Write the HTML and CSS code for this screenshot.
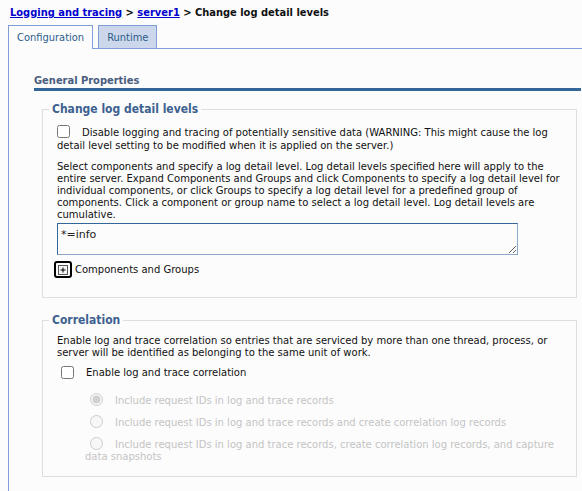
FILE: index.html
```html
<!DOCTYPE html>

<html>
  <head>
    <title>Change log detail levels</title>

    <link rel="stylesheet" href="styles.css">
  </head>
  <body>
    <div class="crumbs">
      <a href="#">Logging and tracing</a> &gt; <a href="#">server1</a> &gt; Change log detail levels
    </div>

    <div class="tabs">
      <span class="tab tab-active">Configuration</span>
      <span class="tab tab-other">Runtime</span>
    </div>

    <main class="panel">
      <h2 class="section-title">General Properties</h2>

      <fieldset class="group">
        <legend>Change log detail levels</legend>

        <label class="check-text">
          <input type="checkbox" class="first-check">Disable logging and tracing of potentially sensitive data (WARNING: This might cause the log detail level setting to be modified when it is applied on the server.)
        </label>

        <p class="help">
          Select components and specify a log detail level. Log detail levels specified here will apply to the
          entire server. Expand Components and Groups and click Components to specify a log detail level for
          individual components, or click Groups to specify a log detail level for a predefined group of
          components. Click a component or group name to select a log detail level. Log detail levels are
          cumulative.
        </p>

        <textarea class="spec">*=info</textarea>

        <div class="toggle">
          <span class="expander">
            <svg width="10" height="10" viewBox="0 0 10 10">
              <rect x="0.5" y="0.5" width="9" height="9" fill="#f4f4f4" stroke="#555"/>
              <path d="M2.5 5h5M5 2.5v5" stroke="#000" stroke-width="1"/>
            </svg>
          </span>
          Components and Groups
        </div>
      </fieldset>

      <fieldset class="group group-last">
        <legend>Correlation</legend>

        <p class="help intro">
          Enable log and trace correlation so entries that are serviced by more than one thread, process, or
          server will be identified as belonging to the same unit of work.
        </p>

        <label class="check-row">
          <input type="checkbox">Enable log and trace correlation
        </label>

        <div class="options">
          <label class="option"><input type="radio" name="corr" checked disabled>Include request IDs in log and trace records</label>
          <label class="option"><input type="radio" name="corr" disabled>Include request IDs in log and trace records and create correlation log records</label>
          <label class="option"><input type="radio" name="corr" disabled>Include request IDs in log and trace records, create correlation log records, and capture data snapshots</label>
        </div>
      </fieldset>
    </main>
  </body>
</html>
```

FILE: styles.css
```css
* { box-sizing: border-box; }
body {
  margin: 0 0 0 8px;
  background: #fcfcfc;
  font-family: "DejaVu Sans", sans-serif;
  font-size: 10px;
  color: #111;
}
a {
  color: #0000cc;
}
.crumbs {
  height: 25px;
  padding: 6px 2px 0;
  font-family: "DejaVu Sans Condensed", "DejaVu Sans", sans-serif;
  font-size: 11px;
  line-height: 13px;
  font-weight: bold;
}
.tabs {
  display: flex;
  gap: 5px;
}
.tab {
  height: 24px;
  padding: 0 8px;
  border: 1px solid #7e9fd5;
  border-bottom: none;
  font-family: "DejaVu Sans Condensed", "DejaVu Sans", sans-serif;
  font-size: 11px;
  line-height: 23px;
  color: #2c5d8b;
}
.tab-active {
  position: relative;
  z-index: 1;
  margin-bottom: -1px;
  background: #fcfcfc;
}
.tab-other {
  background: #ccd7ec;
  height: 23px;
}
.panel {
  display: block;
  border-top: 1px solid #7e9fd5;
  border-left: 1px solid #7e9fd5;
  padding: 25px 0 14px 25px;
  min-height: 443px;
}
.section-title {
  margin: 0 1px 0 0;
  font-family: "DejaVu Sans Condensed", "DejaVu Sans", sans-serif;
  font-size: 11px;
  line-height: 14px;
  color: #4a5d80;
  border-bottom: 3px solid #336699;
}
.group {
  margin: 11px 5px 0 8px;
  padding: 8px 14px 16px;
  border: 1px solid #dedede;
}
.group-last {
  margin-top: 15px;
  padding-bottom: 13px;
}
legend {
  margin-left: -8px;
  padding: 0 3px;
  font-family: "DejaVu Sans Condensed", "DejaVu Sans", sans-serif;
  font-size: 12px;
  font-weight: bold;
  color: #3d6190;
}
.check-text {
  display: block;
  padding-top: 1px;
  line-height: 13px;
}
.first-check {
  width: 13px;
  height: 13px;
  margin: 0 12px 0 0;
  vertical-align: -2px;
}
.help {
  margin: 9px 0 2px;
  line-height: 12px;
}
.intro {
  margin: 0;
}
.spec {
  display: block;
  width: 461px;
  height: 32px;
  margin: 0;
  padding: 4px 3px;
  border: 1px solid #8aa8c8;
  border-top-color: #336699;
  border-left-color: #336699;
  background: #fcfcfc;
  font-family: inherit;
  font-size: 11px;
  color: #222;
}
.toggle {
  display: flex;
  align-items: center;
  gap: 3px;
  margin: 6px 0 3px -3px;
}
.expander {
  display: flex;
  align-items: center;
  justify-content: center;
  width: 18px;
  height: 17px;
  border: 2px solid #000;
  border-radius: 3px;
}
.check-row {
  display: flex;
  align-items: center;
  margin-top: 7px;
}
.check-row input {
  margin: 0 12px 0 4px;
}
.options {
  padding: 14px 0 0 28px;
  color: #c4c4c4;
}
.option {
  display: block;
  line-height: 12px;
  margin-bottom: 8px;
}
.option:last-child {
  margin-bottom: 0;
}
.option input {
  margin: 0 12px 0 5px;
  vertical-align: -2px;
}
```
